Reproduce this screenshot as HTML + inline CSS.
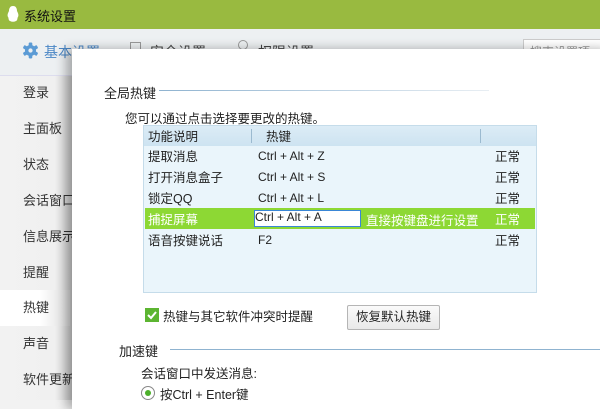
<!DOCTYPE html>
<html><head><meta charset="utf-8"><style>
*{margin:0;padding:0;box-sizing:border-box}
body{width:600px;height:400px;overflow:hidden;position:relative;background:#f2f2f2;font-family:"Liberation Sans","Noto Sans CJK SC",sans-serif;font-size:12px;color:#222}
.a{position:absolute;white-space:nowrap}
</style></head><body>
<div class="a" style="left:0;top:0;width:600px;height:29px;background:#99ba40"></div>
<svg class="a" style="left:7px;top:6px" width="12" height="16" viewBox="0 0 12 16"><path d="M6 0C3 0 2 2.5 2 5 1 7 0 9 1 11 2 12 1 14 3 15 5 16 7 16 9 15 11 14 10 12 11 11 12 9 11 7 10 5 10 2.5 9 0 6 0Z" fill="#fff"/></svg>
<div class="a" style="left:24px;top:6px;font-size:13px;color:#111">系统设置</div>
<div class="a" style="left:0;top:29px;width:600px;height:47px;background:#edf0f2;border-bottom:1px solid #dde"></div>
<svg class="a" style="left:22px;top:42px" width="17" height="17" viewBox="0 0 16 16"><g fill="#5b9bd5"><rect x="6.3" y="0.5" width="3.4" height="15" rx="1"/><rect x="6.3" y="0.5" width="3.4" height="15" rx="1" transform="rotate(60 8 8)"/><rect x="6.3" y="0.5" width="3.4" height="15" rx="1" transform="rotate(120 8 8)"/><circle cx="8" cy="8" r="5.2"/></g><circle cx="8" cy="8" r="2" fill="#edf0f2"/></svg>
<div class="a" style="left:44px;top:42px;font-size:14px;color:#4a86c5">基本设置</div>
<div class="a" style="left:130px;top:42px;width:11px;height:12px;border:1px solid #999"></div>
<div class="a" style="left:150px;top:42px;font-size:14px;color:#444">安全设置</div>
<div class="a" style="left:238px;top:40px;width:10px;height:10px;border:1.5px solid #999;border-radius:50%"></div>
<div class="a" style="left:258px;top:42px;font-size:14px;color:#444">权限设置</div>
<div class="a" style="left:523px;top:39px;width:80px;height:22px;border:1px solid #ccc;background:#fff;color:#999;padding:3px 6px">搜索设置项</div>
<div class="a" style="left:0;top:76px;width:78px;height:324px;background:linear-gradient(90deg,#f2f2f2 0,#f0f0f0 55px,#c8c8c8 78px)"></div>
<div class="a" style="left:0;top:290px;width:70px;height:36px;background:linear-gradient(90deg,#fff 40px,#ddd 70px)"></div>
<div class="a" style="left:23px;top:75px;font-size:13px;line-height:35.9px;color:#333">登录<br>主面板<br>状态<br>会话窗口<br>信息展示<br>提醒<br>热键<br>声音<br>软件更新</div>
<div class="a" style="left:72px;top:49px;width:540px;height:360px;background:#fff;box-shadow:-6px 0 10px rgba(0,0,0,.3)"></div>
<div class="a" style="left:104px;top:83px;font-size:13px">全局热键</div>
<div class="a" style="left:159px;top:90px;width:330px;height:1px;background:linear-gradient(90deg,#8fb3d0,#e8eef3)"></div>
<div class="a" style="left:125px;top:108px;font-size:12.5px">您可以通过点击选择要更改的热键。</div>
<div class="a" style="left:143px;top:125px;width:394px;height:168px;background:#eaf5fb;border:1px solid #c5dcea"></div>
<div class="a" style="left:144px;top:126px;width:392px;height:20px;background:linear-gradient(#dcecf6,#cde3f1)"></div>
<div class="a" style="left:251px;top:129px;width:1px;height:14px;background:#9bbad0"></div>
<div class="a" style="left:480px;top:129px;width:1px;height:14px;background:#9bbad0"></div>
<div class="a" style="left:148px;top:126px;font-size:12.5px">功能说明</div>
<div class="a" style="left:266px;top:126px;font-size:12.5px">热键</div>
<div class="a" style="left:145px;top:208px;width:390px;height:21px;background:#8dd834"></div>
<div class="a" style="left:254px;top:210px;width:107px;height:17px;background:#fff;border:1px solid #3a86d6"></div>
<div class="a" style="left:148px;top:147px;font-size:12.5px;line-height:21px">提取消息<br>打开消息盒子<br>锁定QQ<br><span style="color:#fff">捕捉屏幕</span><br>语音按键说话</div>
<div class="a" style="left:258px;top:146px;font-size:12px;line-height:21px">Ctrl + Alt + Z<br>Ctrl + Alt + S<br>Ctrl + Alt + L<br>&nbsp;<br>F2</div>
<div class="a" style="left:255px;top:210px;font-size:12px">Ctrl + Alt + A</div>
<div class="a" style="left:366px;top:210px;font-size:12.5px;color:#fff">直接按键盘进行设置</div>
<div class="a" style="left:495px;top:147px;font-size:12.5px;line-height:21px">正常<br>正常<br>正常<br><span style="color:#fff">正常</span><br>正常</div>
<div class="a" style="left:145px;top:308px;width:14px;height:14px;background:#5cb531"></div>
<svg class="a" style="left:145px;top:308px" width="14" height="14"><path d="M3 7l3 3 5-6" stroke="#fff" stroke-width="2" fill="none"/></svg>
<div class="a" style="left:163px;top:306px;font-size:12.5px">热键与其它软件冲突时提醒</div>
<div class="a" style="left:347px;top:305px;width:93px;height:25px;border:1px solid #b5b5b5;border-radius:2px;background:linear-gradient(#fafafa,#e9e9e9);text-align:center;line-height:23px;font-size:12.5px">恢复默认热键</div>
<div class="a" style="left:119px;top:341px;font-size:13px">加速键</div>
<div class="a" style="left:170px;top:349px;width:430px;height:1px;background:#8fb3d0"></div>
<div class="a" style="left:141px;top:363px;font-size:12.5px">会话窗口中发送消息:</div>
<div class="a" style="left:141px;top:386px;width:14px;height:14px;border:1px solid #888;border-radius:50%;background:#fff"></div>
<div class="a" style="left:145px;top:390px;width:6px;height:6px;border-radius:50%;background:#4caf2a"></div>
<div class="a" style="left:160px;top:384px;font-size:12.5px">按Ctrl + Enter键</div>
</body></html>
